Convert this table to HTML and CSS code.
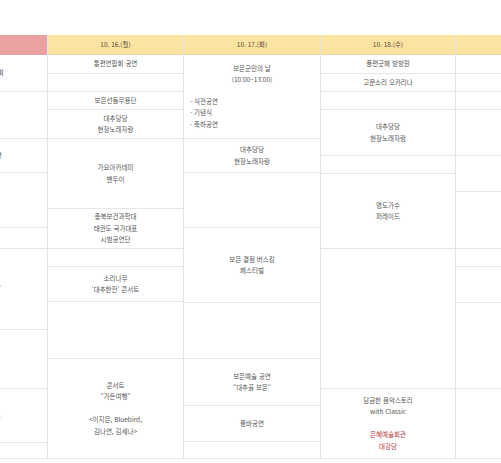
FILE: index.html
```html
<!DOCTYPE html>
<html lang="ko">
<head>
<meta charset="utf-8">
<title>일정표</title>
<link rel="stylesheet" href="styles.css">
</head>
<body>
<div class="viewport">
  <div class="schedule">
    <div class="col">
      <div class="head head-side">10. 15.(일)</div>
      <div class="cell" style="height:37px">보은군 풍물연합회</div>
      <div class="cell" style="height:47px"></div>
      <div class="cell" style="height:34px">청소년 댄스 공연</div>
      <div class="cell" style="height:55px"></div>
      <div class="cell" style="height:21px"></div>
      <div class="cell" style="height:81px">"대추골 음악회"</div>
      <div class="cell" style="height:59px"></div>
      <div class="cell" style="height:54px">청춘 브라스밴드</div>
      <div class="cell" style="height:16px"></div>
    </div>
    <div class="col">
      <div class="head">10. 16.(월)</div>
      <div class="cell" style="height:19px">통편연합회 공연</div>
      <div class="cell" style="height:18px"></div>
      <div class="cell" style="height:18px">보은선돌무용단</div>
      <div class="cell" style="height:29px">대추당당<br>현장노래자랑</div>
      <div class="cell" style="height:70px">가요아카데미<br>밴두이</div>
      <div class="cell" style="height:40px">충북보건과학대<br>태권도 국가대표<br>시범공연단</div>
      <div class="cell" style="height:18px"></div>
      <div class="cell" style="height:35px">소리나무<br>'대추한잔' 콘서트</div>
      <div class="cell" style="height:57px"></div>
      <div class="cell" style="height:100px">콘서트<br>"가든여행"<br><br>&lt;이지은, Bluebird,<br>김나연, 김세나&gt;</div>
    </div>
    <div class="col">
      <div class="head">10. 17.(화)</div>
      <div class="cell" style="height:84px">
        <div class="block">
          <p class="center">보은군민의 날<br>(10:00~13:00)</p>
          <p class="list">- 식전공연<br>- 기념식<br>- 축하공연</p>
        </div>
      </div>
      <div class="cell" style="height:34px">대추당당<br>현장노래자랑</div>
      <div class="cell" style="height:55px"></div>
      <div class="cell" style="height:75px">보은 결점 버스킹<br>페스티벌</div>
      <div class="cell" style="height:56px"></div>
      <div class="cell" style="height:47px">보은예술 공연<br>"대추골 보은"</div>
      <div class="cell" style="height:36px">풍바공연</div>
      <div class="cell" style="height:17px"></div>
    </div>
    <div class="col">
      <div class="head">10. 18.(수)</div>
      <div class="cell" style="height:19px">풍편굿패 방방원</div>
      <div class="cell" style="height:18px">고운소리 오카리나</div>
      <div class="cell" style="height:18px"></div>
      <div class="cell" style="height:46px">대추당당<br>현장노래자랑</div>
      <div class="cell" style="height:18px"></div>
      <div class="cell" style="height:75px">명도가수<br>퍼레이드</div>
      <div class="cell" style="height:140px"></div>
      <div class="cell" style="height:70px"><div>담금한 음악스토리<br>with Classic<br><br><span class="place">은혜예술회관<br>대강당</span></div></div>
    </div>
    <div class="col">
      <div class="head">10. 19.(목)</div>
      <div class="cell" style="height:19px"></div>
      <div class="cell" style="height:18px"></div>
      <div class="cell" style="height:18px"></div>
      <div class="cell" style="height:46px"></div>
      <div class="cell" style="height:36px"></div>
      <div class="cell" style="height:57px"></div>
      <div class="cell" style="height:18px"></div>
      <div class="cell" style="height:36px"></div>
      <div class="cell" style="height:86px"></div>
      <div class="cell" style="height:70px"></div>
    </div>
  </div>
</div>
</body>
</html>
```
FILE: styles.css
```css
* { box-sizing: border-box; }
html, body {
  margin: 0;
  padding: 0;
  background: #fff;
}
body {
  font-family: "Noto Sans CJK KR", "Noto Sans", sans-serif;
  font-size: 6.5px;
  line-height: 11.5px;
  color: #555;
}
.viewport {
  width: 501px;
  height: 463px;
  overflow: hidden;
  padding-top: 35px;
}
.schedule {
  display: flex;
  margin-left: -89px;
  width: 700px;
}
.col {
  display: flex;
  flex-direction: column;
  border-right: 1px solid #e4e4e4;
}
.col:nth-child(1) { width: 137px; }
.col:nth-child(2) { width: 136px; }
.col:nth-child(3) { width: 137px; }
.col:nth-child(4) { width: 135px; }
.col:nth-child(5) { width: 137px; }
.head {
  height: 20px;
  background: #fbe3a2;
  border-bottom: 1px solid #e8d7a6;
  display: flex;
  align-items: center;
  justify-content: center;
  color: #5a4a35;
  font-size: 6.5px;
}
.head-side {
  background: #e9a1a1;
  border-bottom-color: #e0a0a0;
}
.cell {
  border-bottom: 1px solid #e6e6e6;
  display: flex;
  align-items: center;
  justify-content: center;
  text-align: center;
  flex: none;
  white-space: nowrap;
}
.block { width: 100%; }
.block p { margin: 0; }
.block .center { text-align: center; margin-bottom: 10px; }
.block .list { text-align: left; padding-left: 6px; }
.place { color: #b5363a; }
```
